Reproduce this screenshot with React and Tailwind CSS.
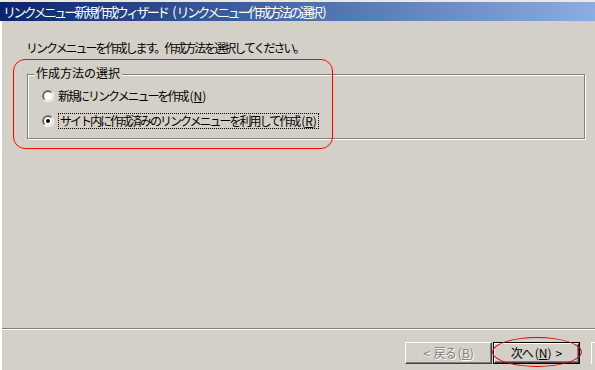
import React from "react";

const font = { fontFamily: '"Noto Sans CJK JP", "Liberation Sans", sans-serif' };

// latin bits keep normal spacing while the Japanese is tightened;
// the margin makes up for the negative tracking of the char before
function L({ children }) {
  return <span className="ml-[2px] tracking-normal">{children}</span>;
}

function Key({ k }) {
  return (
    <L>
      (<span className="underline">{k}</span>)
    </L>
  );
}

function Radio({ checked }) {
  return (
    <span className="relative inline-block h-[12px] w-[12px] shrink-0 rounded-full border border-t-[#808080] border-l-[#808080] border-r-white border-b-white bg-white">
      <span className="absolute inset-0 rounded-full border border-t-[#404040] border-l-[#404040] border-r-[#d4d0c8] border-b-[#d4d0c8]" />
      {checked && <span className="absolute left-[3px] top-[3px] h-[4px] w-[4px] rounded-full bg-black" />}
    </span>
  );
}

function Button({ children, disabled, isDefault }) {
  return (
    <div
      className={
        "flex h-[22px] w-[87px] items-center justify-center text-[12px] tracking-[-1px] " +
        (isDefault ? "border border-black " : "") +
        (disabled ? "text-[#808080] [text-shadow:1px_1px_0_white]" : "text-black")
      }
    >
      <div className="flex h-full w-full items-center justify-center border border-t-white border-l-white border-r-[#404040] border-b-[#404040] shadow-[inset_-1px_-1px_0_#808080]">
        {children}
      </div>
    </div>
  );
}

export default function App() {
  return (
    <div className="relative h-[370px] w-[595px] overflow-hidden bg-[#d4d0c8]" style={font}>
      <div className="h-[2px] bg-[#ece9d8]" />
      <div className="flex h-[19px] items-center bg-gradient-to-r from-[#0a246a] via-[#4a6ea8] to-[#8aaee0] pl-[3px] text-[13px] leading-none tracking-[-2.7px] text-white">
        <span className="whitespace-pre">
          リンクメニュー新規作成ウィザード<L>{" ("}</L>リンクメニュー作成方法の選択<L>)</L>
        </span>
      </div>
      <div className="flex h-[349px] border-l-2 border-l-white">
        <div className="flex flex-1 flex-col">
          <div className="pl-[24px] pt-[21px] text-[12px] leading-none tracking-[-2px] text-black">
            リンクメニューを作成します。作成方法を選択してください。
          </div>
          <div className="relative ml-[25px] mr-[10px] mt-[20px] h-[65px] border border-[#808080] shadow-[1px_1px_0_white,inset_1px_1px_0_white]">
            <div className="absolute left-[6px] top-[-8px] bg-[#d4d0c8] px-[2px] text-[12px] leading-none">
              作成方法の選択
            </div>
            <div className="flex flex-col gap-[11px] pl-[14px] pt-[15px] text-[12px] leading-none tracking-[-2px]">
              <div className="flex items-center gap-[4px]">
                <Radio />
                <span>
                  新規にリンクメニューを作成<Key k="N" />
                </span>
              </div>
              <div className="flex items-center gap-[4px]">
                <Radio checked />
                <span className="border border-dotted border-black px-px py-[1px]">
                  サイト内に作成済みのリンクメニューを利用して作成<Key k="R" />
                </span>
              </div>
            </div>
          </div>
          <div className="mt-auto">
            <div className="h-[2px] border-t border-t-[#808080] border-b border-b-white" />
            <div className="flex h-[40px] justify-end gap-[1px] pt-[12px] pr-0">
              <Button disabled>
                <span className="mr-[4px] tracking-normal">&lt;</span>戻る<Key k="B" />
              </Button>
              <Button isDefault>
                次へ<Key k="N" />
                <span className="ml-[4px] tracking-normal">&gt;</span>
              </Button>
              <div className="ml-[10px] h-[22px] w-[4px] border-l border-t border-t-white border-l-white" />
            </div>
          </div>
        </div>
      </div>

      {/* red annotations */}
      <div className="pointer-events-none absolute left-[13px] top-[59px] h-[90px] w-[320px] rounded-[12px] border border-[#ff0000]" />
      <div className="pointer-events-none absolute left-[492px] top-[337px] h-[30px] w-[90px] rounded-[50%] border border-[#e00000]" />
    </div>
  );
}
